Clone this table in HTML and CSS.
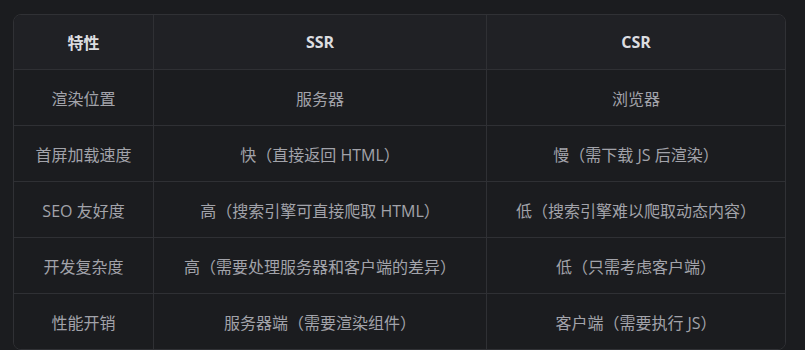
FILE: index.html
```html
<!DOCTYPE html>
<html lang="zh">
<head>
<meta charset="utf-8">
<link rel="stylesheet" href="styles.css">
</head>
<body>
<div class="wrap">
<table class="cmp">
<thead>
<tr><th class="c1">特性</th><th class="c2">SSR</th><th class="c3">CSR</th></tr>
</thead>
<tbody>
<tr><td>渲染位置</td><td>服务器</td><td>浏览器</td></tr>
<tr><td>首屏加载速度</td><td>快（直接返回 HTML）</td><td>慢（需下载 JS 后渲染）</td></tr>
<tr><td>SEO 友好度</td><td>高（搜索引擎可直接爬取 HTML）</td><td>低（搜索引擎难以爬取动态内容）</td></tr>
<tr><td>开发复杂度</td><td>高（需要处理服务器和客户端的差异）</td><td>低（只需考虑客户端）</td></tr>
<tr><td>性能开销</td><td>服务器端（需要渲染组件）</td><td>客户端（需要执行 JS）</td></tr>
</tbody>
</table>
</div>
</body>
</html>
```
FILE: styles.css
```css
html, body {
  margin: 0;
  padding: 0;
  background: #1b1c1f;
}
body {
  font-family: "Open Sans", "Noto Sans CJK SC", sans-serif;
  font-size: 16px;
}
.wrap {
  padding: 14px 19px 0 13px;
}
.cmp {
  width: 773px;
  border-collapse: separate;
  border-spacing: 0;
  border: 1px solid #303135;
  border-radius: 8px;
  overflow: hidden;
  table-layout: fixed;
}
.cmp th, .cmp td {
  text-align: center;
  vertical-align: middle;
  border-right: 1px solid #2f3034;
  border-bottom: 1px solid #2f3034;
  padding: 0;
}
.cmp th:last-child, .cmp td:last-child {
  border-right: none;
}
.cmp tbody tr:last-child td {
  border-bottom: none;
}
.cmp th {
  height: 54px;
  background: #202125;
  color: #dcdde0;
  font-weight: 700;
}
.cmp td {
  height: 55px;
  background: #1b1c1f;
  color: #a2a3aa;
}
.c1 { width: 139px; }
.c2 { width: 332px; }
```
